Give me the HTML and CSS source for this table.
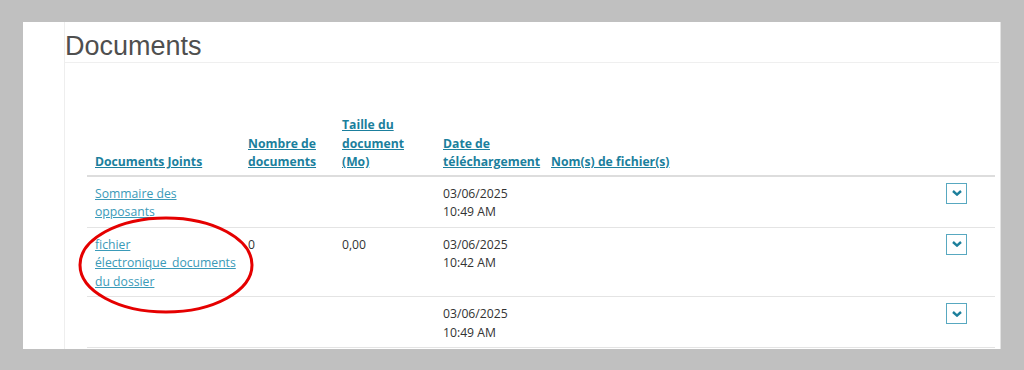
FILE: index.html
```html
<!DOCTYPE html>
<html lang="fr">
<head>
<meta charset="utf-8">
<title>Documents</title>
<link rel="stylesheet" href="styles.css">
</head>
<body>
<div class="panel">
  <div class="content">
    <h1 class="title">Documents</h1>
    <table class="docs">
      <thead>
        <tr>
          <th class="c1"><a href="#">Documents Joints</a></th>
          <th class="c2"><a href="#">Nombre de documents</a></th>
          <th class="c3"><a href="#">Taille du document (Mo)</a></th>
          <th class="c4"><a href="#">Date de téléchargement</a></th>
          <th class="c5"><a href="#">Nom(s) de fichier(s)</a></th>
          <th class="c6"></th>
        </tr>
      </thead>
      <tbody>
        <tr>
          <td><a href="#">Sommaire des opposants</a></td>
          <td></td>
          <td></td>
          <td>03/06/2025<br>10:49 AM</td>
          <td></td>
          <td class="btncell"><button class="expand" aria-label="Afficher"><svg viewBox="0 0 10 6" width="10" height="6"><path d="M1 1 L5 4.6 L9 1" fill="none" stroke="#1d7f9c" stroke-width="2.4"/></svg></button></td>
        </tr>
        <tr>
          <td class="annotated"><a href="#">fichier électronique_documents du dossier</a>
            <svg class="circle" viewBox="0 0 180 100" width="180" height="100"><ellipse cx="90" cy="50" rx="86" ry="47" fill="none" stroke="#e50000" stroke-width="3"/></svg>
          </td>
          <td>0</td>
          <td>0,00</td>
          <td>03/06/2025<br>10:42 AM</td>
          <td></td>
          <td class="btncell"><button class="expand" aria-label="Afficher"><svg viewBox="0 0 10 6" width="10" height="6"><path d="M1 1 L5 4.6 L9 1" fill="none" stroke="#1d7f9c" stroke-width="2.4"/></svg></button></td>
        </tr>
        <tr>
          <td></td>
          <td></td>
          <td></td>
          <td>03/06/2025<br>10:49 AM</td>
          <td></td>
          <td class="btncell"><button class="expand" aria-label="Afficher"><svg viewBox="0 0 10 6" width="10" height="6"><path d="M1 1 L5 4.6 L9 1" fill="none" stroke="#1d7f9c" stroke-width="2.4"/></svg></button></td>
        </tr>
      </tbody>
    </table>
  </div>
</div>
</body>
</html>
```
FILE: styles.css
```css
html, body {
  margin: 0;
  padding: 0;
}
body {
  background: #c0c0c0;
  padding: 22px 0 0 23px;
  height: 370px;
  box-sizing: border-box;
  overflow: hidden;
}
.panel {
  width: 978px;
  height: 327px;
  background: #ffffff;
  border-right: 1px solid #e2e2e2;
  box-sizing: border-box;
  overflow: hidden;
}
.content {
  margin-left: 41px;
  margin-right: 1px;
  border-left: 1px solid #eeeeee;
  height: 100%;
}
.title {
  margin: 0;
  padding: 9px 0 1px 0;
  font-family: "Liberation Sans", Arial, sans-serif;
  font-weight: normal;
  font-size: 27px;
  line-height: 30px;
  color: #4f4f4f;
  border-bottom: 1px solid #efefef;
}
.docs {
  margin: 42px 0 0 22px;
  width: 908px;
  table-layout: fixed;
  border-collapse: collapse;
  font-family: "Open Sans", "Noto Sans", sans-serif;
  font-size: 12.2px;
  line-height: 18.5px;
  color: #333333;
}
.docs th {
  text-align: left;
  vertical-align: bottom;
  font-weight: bold;
  padding: 11px 8px 3px 8px;
  border-bottom: 2px solid #dddddd;
  white-space: normal;
}
.docs th a {
  color: #1b7f9d;
  text-decoration: underline;
}
.docs td {
  vertical-align: top;
  padding: 8px 8px 5px 8px;
  border-bottom: 1px solid #e4e4e4;
}
.docs td a {
  color: #3a9ab8;
  text-decoration: underline;
}
.c1 { width: 137px; }
.c2 { width: 78px; }
.c3 { width: 85px; }
.c4 { width: 92px; }
.docs .c6 { width: 22px; padding-right: 27px; }
.docs .btncell {
  padding-top: 6px;
  padding-right: 27px;
}
.expand {
  width: 21px;
  height: 21px;
  padding: 0;
  margin: 0;
  background: #ffffff;
  border: 1.5px solid #58a8c0;
  display: flex;
  align-items: center;
  justify-content: center;
  cursor: pointer;
}
.annotated {
  position: relative;
}
.circle {
  position: absolute;
  left: -11px;
  top: -13px;
}
```
